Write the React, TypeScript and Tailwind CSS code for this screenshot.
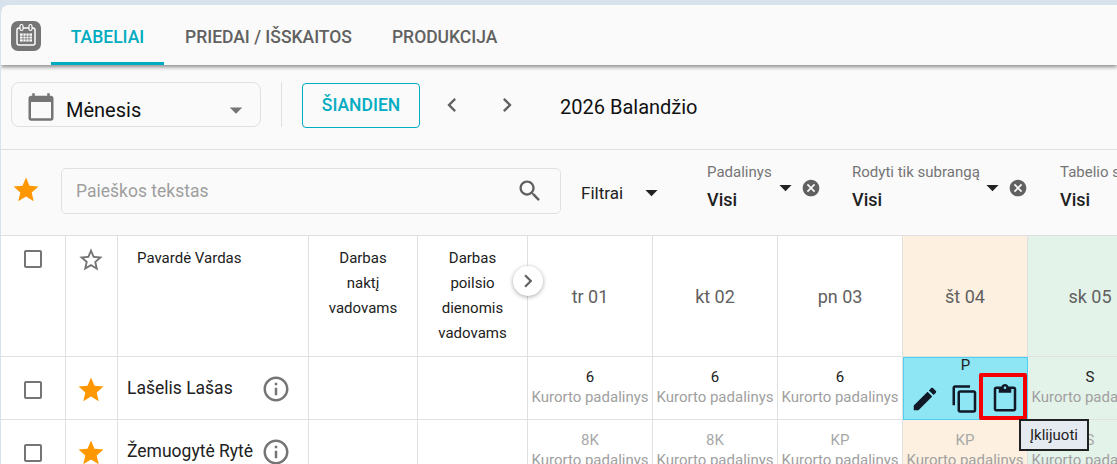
import React from 'react';

const PATHS = {
  calendar: 'M20 3h-1V1h-2v2H7V1H5v2H4c-1.1 0-2 .9-2 2v16c0 1.1.9 2 2 2h16c1.1 0 2-.9 2-2V5c0-1.1-.9-2-2-2zm0 18H4V8h16v13z',
  copy: 'M16 1H4c-1.1 0-2 .9-2 2v14h2V3h12V1zm3 4H8c-1.1 0-2 .9-2 2v14c0 1.1.9 2 2 2h11c1.1 0 2-.9 2-2V7c0-1.1-.9-2-2-2zm0 16H8V7h11v14z',
  paste: 'M19 2h-4.18C14.4.84 13.3 0 12 0c-1.3 0-2.4.84-2.82 2H5c-1.1 0-2 .9-2 2v16c0 1.1.9 2 2 2h14c1.1 0 2-.9 2-2V4c0-1.1-.9-2-2-2zm-7 0c.55 0 1 .45 1 1s-.45 1-1 1-1-.45-1-1 .45-1 1-1zm7 18H5V4h2v3h10V4h2v16z',
  edit: 'M3 17.25V21h3.75L17.81 9.94l-3.75-3.75L3 17.25zM20.71 7.04c.39-.39.39-1.02 0-1.41l-2.34-2.34c-.39-.39-1.02-.39-1.41 0l-1.83 1.83 3.75 3.75 1.83-1.83z',
  search: 'M15.5 14h-.79l-.28-.27C15.41 12.59 16 11.11 16 9.5 16 5.91 13.09 3 9.5 3S3 5.91 3 9.5 5.91 16 9.5 16c1.61 0 3.09-.59 4.23-1.57l.27.28v.79l5 4.99L20.49 19l-4.99-5zm-6 0C7.01 14 5 11.99 5 9.5S7.01 5 9.5 5 14 7.01 14 9.5 11.99 14 9.5 14z',
  star: 'M12 17.27L18.18 21l-1.64-7.03L22 9.24l-7.19-.61L12 2 9.19 8.63 2 9.24l5.46 4.73L5.82 21z',
  starBorder: 'M22 9.24l-7.19-.62L12 2 9.19 8.63 2 9.24l5.46 4.73L5.82 21 12 17.27 18.18 21l-1.63-7.03L22 9.24zM12 15.4l-3.76 2.27 1-4.28-3.32-2.88 4.38-.38L12 6.1l1.71 4.04 4.38.38-3.32 2.88 1 4.28L12 15.4z',
  cancel: 'M12 2C6.47 2 2 6.47 2 12s4.47 10 10 10 10-4.47 10-10S17.53 2 12 2zm5 13.59L15.59 17 12 13.41 8.41 17 7 15.59 10.59 12 7 8.41 8.41 7 12 10.59 15.59 7 17 8.41 13.41 12 17 15.59z',
  checkbox: 'M19 5v14H5V5h14m0-2H5c-1.1 0-2 .9-2 2v14c0 1.1.9 2 2 2h14c1.1 0 2-.9 2-2V5c0-1.1-.9-2-2-2z',
  info: 'M11 7h2v2h-2zm0 4h2v6h-2zm1-9C6.48 2 2 6.48 2 12s4.48 10 10 10 10-4.48 10-10S17.52 2 12 2zm0 18c-4.41 0-8-3.59-8-8s3.59-8 8-8 8 3.59 8 8-3.59 8-8 8z',
  left: 'M15.41 7.41L14 6l-6 6 6 6 1.41-1.41L10.83 12z',
  right: 'M10 6L8.59 7.41 13.17 12l-4.58 4.59L10 18l6-6z',
  drop: 'M7 10l5 5 5-5z',
};

const Icon = ({ d, className }: { d: string; className: string }) => (
  <svg viewBox="0 0 24 24" fill="currentColor" className={`shrink-0 ${className}`}>
    <path d={d} />
  </svg>
);

const AppLogo = () => (
  <svg viewBox="0 0 30 30" className="w-[30px] h-[30px] shrink-0">
    <rect width="30" height="30" rx="7" fill="#757575" />
    <rect x="6" y="7" width="18" height="17" rx="2" fill="none" stroke="#fff" strokeWidth="1.5" />
    <rect x="9" y="3.5" width="3" height="6" rx="1.5" fill="#757575" stroke="#fff" strokeWidth="1.2" />
    <rect x="18" y="3.5" width="3" height="6" rx="1.5" fill="#757575" stroke="#fff" strokeWidth="1.2" />
    <path d="M9 12.5h12v8H9z" fill="#fff" />
    <path d="M9 15.2h12M9 17.9h12M12 12.5v8M15 12.5v8M18 12.5v8" stroke="#757575" strokeWidth="0.8" />
  </svg>
);

const FilterField = ({ label, width, arrowGap }: { label: string; width: string; arrowGap: string }) => (
  <div className={`flex shrink-0 ${width}`}>
    <div className="flex flex-col">
      <span className="text-[15px] leading-[16px] text-[#757575] whitespace-nowrap mt-[14px]">{label}</span>
      <span className="text-[18px] leading-[22px] font-medium text-[#212121] mt-[9px]">Visi</span>
    </div>
    <div className={`flex items-center h-[24px] mt-[26px] ${arrowGap}`}>
      <Icon d={PATHS.drop} className="w-[29px] h-[29px] -mx-[2.5px] -mt-[2px] text-[#212121]" />
      <Icon d={PATHS.cancel} className="w-[20px] h-[20px] ml-[3px] text-[#616161]" />
    </div>
  </div>
);

const Check = () => <Icon d={PATHS.checkbox} className="w-[24px] h-[24px] text-[#757575]" />;

const cell = 'border-r border-b border-[#e0e0e0] overflow-hidden';

const DayHead = ({ label, bg = '' }: { label: string; bg?: string }) => (
  <div className={`${cell} ${bg} flex items-center justify-center text-[18px] text-[#616161] pt-[1px]`}>{label}</div>
);

const Shift = ({ code, bg = '', muted = false }: { code: string; bg?: string; muted?: boolean }) => (
  <div className={`${cell} ${bg} flex flex-col items-center pt-[12px] whitespace-nowrap`}>
    <span className={`text-[15px] leading-[17px] ${muted ? 'text-[#a8a8a8]' : 'text-[#212121]'}`}>{code}</span>
    <span className="text-[15px] leading-[22px] text-[#a0a0a0]">Kurorto padalinys</span>
  </div>
);

const HeadText = ({ lines }: { lines: string[] }) => (
  <div className={`${cell} flex flex-col items-center pt-[10px] text-[15px] leading-[25px] text-[#212121]`}>
    {lines.map((l) => (
      <span key={l}>{l}</span>
    ))}
  </div>
);

const Person = ({ name }: { name: string }) => (
  <>
    <div className={`${cell} flex justify-center pt-[21px]`}>
      <Check />
    </div>
    <div className={`${cell} flex justify-center pt-[18px] pr-[2px]`}>
      <Icon d={PATHS.star} className="w-[30px] h-[30px] text-[#ff9800]" />
    </div>
    <div className={`${cell} flex pt-[19px] pl-[9px] pr-[20px] justify-between`}>
      <span className="text-[17.5px] leading-[24px] text-[#212121] whitespace-nowrap">{name}</span>
      <Icon d={PATHS.info} className="w-[30px] h-[30px] -mt-[2px] text-[#757575] -mr-[3px]" />
    </div>
    <div className={cell} />
    <div className={cell} />
  </>
);

export default function App() {
  return (
    <div className="w-[1117px] h-[464px] overflow-hidden bg-[#d8e2ec] pt-[5px] pl-[1px] font-['Roboto',sans-serif]">
      <div className="relative h-[459px] bg-[#fafafa] rounded-tl-[8px] overflow-hidden">
        {/* Tabs */}
        <div className="relative z-10 h-[60px] flex pl-[10px] pt-[16px] items-start bg-[#fafafa] shadow-[0_2px_4px_rgba(0,0,0,0.45)]">
          <AppLogo />
          <div className="flex ml-[10px] h-[44px]">
            <div className="w-[113px] h-[44px] border-b-[3px] border-[#00acc1] text-center text-[#00acc1] text-[17.5px] font-medium leading-[33px]">
              TABELIAI
            </div>
            <div className="ml-[1px] px-[20px] text-[#616161] text-[17.5px] font-medium leading-[33px] whitespace-nowrap">PRIEDAI / IŠSKAITOS</div>
            <div className="px-[20px] text-[#616161] text-[17.5px] font-medium leading-[33px]">PRODUKCIJA</div>
          </div>
        </div>

        {/* Period toolbar */}
        <div className="h-[85px] flex items-start pt-[17px] pl-[10px] border-b border-[#e0e0e0]">
          <div className="w-[250px] h-[45px] border border-[#e0e0e0] rounded-[8px] flex items-center pl-[14px] pr-[19px]">
            <Icon d={PATHS.calendar} className="w-[30px] h-[30px] text-[#757575] mt-[5px]" />
            <span className="ml-[10px] text-[20px] text-[#111] mt-[10px]">Mėnesis</span>
            <Icon d={PATHS.drop} className="ml-auto w-[30px] h-[30px] mt-[10px] text-[#757575] -mr-[10px]" />
          </div>
          <div className="w-px h-[45px] bg-[#e0e0e0] ml-[20px]" />
          <div className="ml-[20px] mt-[1px] w-[118px] h-[45px] border border-[#00acc1] rounded-[4px] flex items-center justify-center text-[#00acc1] text-[17.5px] font-medium">
            ŠIANDIEN
          </div>
          <Icon d={PATHS.left} className="w-[28px] h-[28px] ml-[18px] mt-[9px] text-[#616161]" />
          <Icon d={PATHS.right} className="w-[28px] h-[28px] ml-[27px] mt-[9px] text-[#616161]" />
          <span className="ml-[39px] mt-[12px] text-[20px] leading-[26px] text-[#111] whitespace-nowrap">2026 Balandžio</span>
        </div>

        {/* Filters */}
        <div className="h-[85px] flex items-start pl-[10px] bg-[#fafafa]">
          <Icon d={PATHS.star} className="w-[30px] h-[30px] mt-[25px] text-[#ff9800]" />
          <div className="ml-[20px] mt-[18px] w-[500px] h-[46px] shrink-0 border border-[#e0e0e0] rounded-[5px] flex items-center pl-[14px] pr-[16px]">
            <span className="text-[17.5px] text-[#9e9e9e]">Paieškos tekstas</span>
            <Icon d={PATHS.search} className="ml-auto w-[28px] h-[28px] text-[#616161]" />
          </div>
          <span className="ml-[20px] mt-[33px] text-[17px] leading-[20px] text-[#212121] shrink-0">Filtrai</span>
          <Icon d={PATHS.drop} className="ml-[14px] mt-[28px] w-[29px] h-[29px] text-[#212121]" />
          <div className="ml-[41px] flex shrink-0">
            <FilterField label="Padalinys" width="w-[145px]" arrowGap="ml-[2px]" />
            <FilterField label="Rodyti tik subrangą" width="w-[208px]" arrowGap="ml-[1px]" />
            <FilterField label="Tabelio statusas" width="w-[120px]" arrowGap="hidden" />
          </div>
        </div>

        {/* Table */}
        <div className="relative border-t border-[#e0e0e0] bg-white grid grid-cols-[65px_52px_191px_109px_110px_125px_125px_125px_125px_125px] grid-rows-[121px_63px_63px]">
          <div className={`${cell} flex justify-center pt-[11px]`}>
            <Check />
          </div>
          <div className={`${cell} flex justify-center pt-[10px] pr-[2px]`}>
            <Icon d={PATHS.starBorder} className="w-[28px] h-[28px] text-[#757575]" />
          </div>
          <div className={`${cell} pl-[19px] pt-[10px] text-[15px] leading-[25px] text-[#212121]`}>Pavardė Vardas</div>
          <HeadText lines={['Darbas', 'naktį', 'vadovams']} />
          <HeadText lines={['Darbas', 'poilsio', 'dienomis', 'vadovams']} />
          <DayHead label="tr 01" />
          <DayHead label="kt 02" />
          <DayHead label="pn 03" />
          <DayHead label="št 04" bg="bg-[#fdf0e0]" />
          <DayHead label="sk 05" bg="bg-[#e4f3e9]" />

          <Person name="Lašelis Lašas" />
          <Shift code="6" />
          <Shift code="6" />
          <Shift code="6" />
          <div className="border border-[#4dd0f0] bg-[#8ee6f4] flex flex-col items-center overflow-hidden">
            <span className="text-[15px] leading-[14px] text-[#212121]">P</span>
            <div className="flex items-center gap-[10px] mt-[12px] -ml-[1px]">
              <Icon d={PATHS.edit} className="w-[30px] h-[30px] text-[#111827]" />
              <Icon d={PATHS.copy} className="w-[30px] h-[30px] text-[#111827]" />
              <Icon d={PATHS.paste} className="w-[30px] h-[30px] text-[#111827]" />
            </div>
          </div>
          <Shift code="S" bg="bg-[#e4f3e9]" />

          <Person name="Žemuogytė Rytė" />
          <Shift code="8K" muted />
          <Shift code="8K" muted />
          <Shift code="KP" muted />
          <Shift code="KP" bg="bg-[#fdf0e0]" muted />
          <Shift code="S" bg="bg-[#e4f3e9]" muted />

          {/* Scroll button */}
          <div className="absolute left-[512px] top-[30px] w-[30px] h-[30px] rounded-full bg-white shadow-[0_1px_4px_rgba(0,0,0,0.35)] flex items-center justify-center">
            <Icon d={PATHS.right} className="w-[26px] h-[26px] text-[#616161]" />
          </div>

          {/* Highlighted paste action */}
          <div className="absolute left-[978px] top-[137px] w-[48px] h-[47px] border-[4px] border-[#f50000] rounded-[2px]" />

          {/* Tooltip */}
          <div className="absolute left-[1018px] top-[183px] w-[70px] h-[32px] border-2 border-[#212121] bg-[#e5e9f0] flex items-center justify-center text-[15px] text-[#212121]">
            Įklijuoti
          </div>
        </div>
      </div>
    </div>
  );
}
